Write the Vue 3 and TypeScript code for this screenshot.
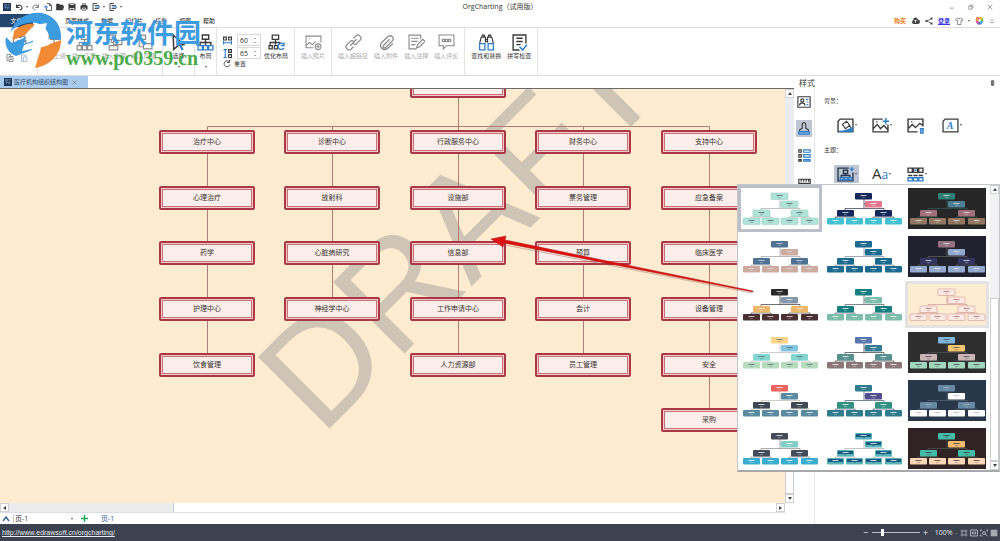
<script setup lang="ts">
import { h, ref } from 'vue'

interface Shape { d: string; s?: string; f?: string; w?: number }
const K = '#3a3a3a'
const B = '#2f7fc8'
const G = '#8b8b8b'

const icons: Record<string, Shape[]> = {
  app: [{ d: 'M0 0H16V16H0Z', f: '#1c3554' }, { d: 'M3 3h4v3H3zM9 3h4M9 6h4M5 6v6M3 9h10M9 9v4M12 9v4', s: '#6f9ac4' }],
  undo: [{ d: 'M3 3v6h6M3 8c4-6 11-4 11 1 0 3-2 5-5 5', s: K, w: 2.2 }],
  redo: [{ d: 'M13 3v6H7M13 8C9 2 2 4 2 9c0 3 2 5 5 5', s: '#777', w: 2 }],
  newdoc: [{ d: 'M6 1h5l4 4v10H5v-4M11 1v4h4', s: K, w: 1.6 }, { d: 'M0 8h8M4 4v8', s: B, w: 1.8 }],
  folder: [{ d: 'M1 14V2h5l2 2h6v3M1 14l3-7h12l-3 7z', f: K, s: K }],
  save: [{ d: 'M1 1h12l2 2v12H1z', f: K }, { d: 'M4 3h8M4 11h8v4H4z', s: '#fff', w: 1.6 }],
  print: [{ d: 'M4 1h8v4h3v8h-3v2H4v-2H1V5h3z', f: K }, { d: 'M5 3h6M5 10h6v3H5z', s: '#fff', w: 1.4 }],
  exp: [{ d: 'M10 1H2v14h8M5 5h9M5 11h9', s: K, w: 1.8 }, { d: 'M6 8h9M12 5l3 3-3 3', s: B, w: 1.8 }],
  copy: [{ d: 'M2 1h7v3M2 1v12h3M6 5h8v10H6zM8 8h4M8 11h4', s: '#777', w: 1.6 }],
  paste: [{ d: 'M3 2h9v3M3 2v13h3M7 6h7v9H7z', s: '#8faed0', w: 1.6 }],
  clip: [{ d: 'M3 2h10v4M3 2v12h3M6 1h4v2H6zM7 6h7v9H7z', s: G, w: 1.2 }],
  superior: [{ d: 'M3 1h9v4H3zM7.500 5v5M3 10h9v5H3z', s: G, w: 1.1 }],
  org: [{ d: 'M5 1h6v4H5zM8 5v5M3 11V8h10v3M8 8v3M1 11h4v4H1zM6 11h4v4H6zM11 11h4v4h-4z', s: G, w: 1.1 }],
  assist: [{ d: 'M1 1h8v4H1zM5 5v3M7 6h8v4H7zM5 8h2M3 11h8v4H3z', s: G, w: 1.1 }],
  peer: [{ d: 'M1 1h8v4H1zM3 5v7h4M7 9h8v5H7z', s: G, w: 1.1 }],
  cursor: [{ d: 'M3 1l10 9-5 .5-4.500 4z', s: K, w: 1.4 }, { d: 'M9 10l3 5', s: B, w: 2 }],
  layout: [{ d: 'M5 1h6v4H5zM8 5v6M3 11V8h10v3', s: K, w: 1.3 }, { d: 'M1 11h4v4H1zM6 11h4v4H6zM11 11h4v4h-4z', s: B, w: 1.2 }],
  hgap: [{ d: 'M1 2h5v5H1zM10 2h5v5h-5z', s: K, w: 2 }, { d: 'M1 9v6M15 9v6M2 12h12', s: B, w: 2 }],
  vgap: [{ d: 'M10 1h5v5h-5zM10 10h5v5h-5z', s: K, w: 2 }, { d: 'M1 1h6M1 15h6M4 2v12', s: B, w: 2 }],
  reset: [{ d: 'M13 4A6 6 0 1 0 14 9M13 0v5H8', s: K, w: 1.7 }],
  optimize: [{ d: 'M4 1h6v4H4zM7 5v5M2 11V8h9v2M1 11h3v3H1zM6 11h3v3H6z', s: K, w: 1.2 }, { d: 'M15 10a3 3 0 1 0 0 3M15 8v3h-3', s: B, w: 1.2 }],
  photo: [{ d: 'M8 13H1V2h14v6M1 11l3-3 3 2 3-3M4 4.500h1M15 12a2.700 2.700 0 1 1-5.400 0 2.700 2.700 0 0 1 5.400 0M12.300 10.300v3.400M10.600 12h3.400', s: G, w: 1 }],
  link: [{ d: 'M8 4l2.500-2.500a2 2 0 0 1 3 0l1 1a2 2 0 0 1 0 3L11 9a2 2 0 0 1-3 0M8 12l-2.500 2.500a2 2 0 0 1-3 0l-1-1a2 2 0 0 1 0-3L5 7a2 2 0 0 1 3 0M5 11l6-6', s: G, w: 1.2 }],
  attach: [{ d: 'M11 5l-6 6a1.500 1.500 0 0 0 2 2l7-7a3 3 0 0 0-4-4L3 8.500a4 4 0 0 0 5.500 5.500L14 9', s: G, w: 1.2 }],
  note: [{ d: 'M12 5V1H1v13h7M3 4h7M3 7h6M3 10h4M8 13l1-3 5-5 2 2-5 5z', s: G, w: 1.1 }],
  comment: [{ d: 'M1 1h14v10H8l-3 3v-3H1zM4 5h2v2H4zM7 5h2v2H7zM10 5h2v2h-2z', s: G, w: 1 }],
  find: [{ d: 'M4 1h2v2H4zM10 1h2v2h-2zM3 3h4v5M13 3H9v5M3 3L1.500 9M13 3l1.500 6M7 5h2M7 7h2', s: K, w: 1.1 }, { d: 'M1.500 9h5v6h-5zM9.500 9h5v6h-5z', s: B, w: 1.2 }],
  spell: [{ d: 'M14 9V1H2v14h6M5 4h6M5 7h6M5 10h4', s: K, w: 1.3 }, { d: 'M8 12l3 3 4-5', s: B, w: 1.5 }],
  cloud: [{ d: 'M4 14a4 4 0 0 1 0-7 4 4 0 0 1 8-1 4 4 0 0 1 0 8z', f: '#444' }, { d: 'M8 12V7M6 9l2-2 2 2', s: '#fff', w: 1.4 }],
  share: [{ d: 'M13 3L4 8l9 5', s: '#444', w: 1.4 }, { d: 'M11 1h4v4h-4zM1 6h4v4H1zM11 11h4v4h-4z', f: '#444' }],
  shirt: [{ d: 'M5 2L1 5l2 3 2-1v8h7V7l2 1 2-3-5-3c-1 2-4 2-5 0z', s: '#555', w: 1.3 }],
  color: [{ d: 'M8 8L2 2h6z', f: '#e6533c' }, { d: 'M8 8V1l6 2z', f: '#f2b83b' }, { d: 'M8 8l6-5 1 7z', f: '#7ac143' }, { d: 'M8 8l7 2-4 5z', f: '#39a7d8' }, { d: 'M8 8l3 7H4z', f: '#5964c9' }, { d: 'M8 8l-4 7-3-6z', f: '#cf4f9d' }, { d: 'M8 8L1 9l1-7z', f: '#ef8b34' }, { d: 'M6 6h4v4H6z', f: '#fff' }],
  up: [{ d: 'M3 9l5-5 5 5M3 12h10', s: '#666', w: 1.4 }],
  min: [{ d: 'M3 11h9', s: '#444', w: 1.6 }],
  restore: [{ d: 'M2 6h8v8H2zM5 6V3h8v8h-3', s: '#555', w: 1.3 }],
  close: [{ d: 'M2 2l12 12M14 2L2 14', s: '#555', w: 1.5 }],
  pin: [{ d: 'M4 2h6v12H4zM7 2v12', s: '#333', w: 2 }],
  person: [{ d: 'M1 2h14v12H1zM3 12c0-4 6-4 6 0', s: K, w: 1.3 }, { d: 'M6 4.500a1.800 1.800 0 1 0 .1 0', s: K, w: 1.3 }, { d: 'M10 5h3M11 8h2M11 11h2', s: B, w: 1.3 }],
  stamp: [{ d: 'M6 7V3c0-3 4-3 4 0v4l3 2v2H3V9z', s: K, w: 1.3 }, { d: 'M2 11h12v3H2z', f: '#6fa6e0', s: B }],
  list: [{ d: 'M1 1h3v3H1zM1 7h3v3H1zM1 13h3v2H1z', s: K, w: 1.4 }, { d: 'M7 1h8v3H7zM7 7h8v3H7zM7 13h8v2H7z', s: B, w: 1.4 }],
  ruler: [{ d: 'M1 4h14v5H1zM4 4v3M7 4v3M10 4v3M13 4v3', s: K, w: 1.4 }, { d: 'M1 13h14', s: B, w: 2 }],
  bgfill: [{ d: 'M3 2h12v12H1V4z', s: K, w: 1.3 }, { d: 'M2 13c4 0 9-1 13-4v5H2z', f: B }, { d: 'M5 7l4-3 3 4-4 3zM11 7l2 3', s: K, w: 1 }],
  bgimg: [{ d: 'M10 2H1v12h14V7M1 11l4-4 3 4 3-3 4 4M4 4.500h1', s: K, w: 1.3 }, { d: 'M13 1v6M10 4h6', s: B, w: 1.4 }],
  bgdel: [{ d: 'M10 14H1V2h14v7M1 11l4-4 3 3 4-4 3 2M4 4.500h1', s: K, w: 1.3 }, { d: 'M12 11h4M13 11v4h2v-4', s: B, w: 1.4 }],
  bgmark: [{ d: 'M3 2h12v12H1V4z', s: K, w: 1.2 }],
  theme: [{ d: 'M11 2H1v12h14V6M6 4h4v3H6zM8 7v2M4 11V9h8v2', s: '#26364e', w: 1.3 }, { d: 'M3 11h3v2H3zM7 11h3v2H7zM11 11h3v2h-3zM14 1v4M12 3h4', s: B, w: 1.2 }],
  connector: [{ d: 'M1 2h4v4H1zM6 2h4v4H6zM11 2h4v4h-4zM1 9h4M6 9h4M11 9h4', s: K, w: 1.3 }, { d: 'M1 11h4v3H1zM6 11h4v3H6zM11 11h4v3h-4zM7 4h2', s: B, w: 1.3 }],
  fit: [{ d: 'M4 4h8v8H4zM1 4h2M4 1v2M12 1v2M13 4h2M1 12h2M4 13v2M12 13v2M13 12h2', s: '#cfd3da', w: 1.4 }],
  wide: [{ d: 'M1 2h14v12H1zM4 8h8M6 5L4 8l2 3M10 5l2 3-2 3', s: '#cfd3da', w: 1.5 }],
  region: [{ d: 'M1 5V2h3M12 2h3v3M1 11v3h4M11 8a3 3 0 1 1-6 0 3 3 0 0 1 6 0M10 10l5 4', s: '#cfd3da', w: 1.5 }],
  grid: [{ d: 'M1 4h14M1 8h14M1 12h14M4 1v14M8 1v14M12 1v14', s: '#e4e7ec', w: 1.6 }],
}

const Icon = (p: { name: string; size?: number }) =>
  h('svg', { viewBox: '0 0 16 16', width: p.size ?? 8, height: p.size ?? 8, 'aria-hidden': 'true', style: { display: 'block', flex: 'none' } },
    icons[p.name].map(s => h('path', { d: s.d, fill: s.f ?? 'none', stroke: s.s ?? 'none', 'stroke-width': s.w ?? 1.2 })))
Icon.props = ['name', 'size']

interface Tool { icon: string; label: string }
const editTools: Tool[] = [
  { icon: 'superior', label: '插入上级' },
  { icon: 'org', label: '插入下属' },
  { icon: 'assist', label: '插入助理' },
  { icon: 'peer', label: '插入同级' },
]
const linkTools: Tool[] = [
  { icon: 'link', label: '插入超链接' },
  { icon: 'attach', label: '插入附件' },
  { icon: 'note', label: '插入注释' },
  { icon: 'comment', label: '插入评论' },
]
const textTools: Tool[] = [
  { icon: 'find', label: '查找和替换' },
  { icon: 'spell', label: '拼写检查' },
]
const menus = ['开始', '页面样式', '数据', '幻灯片', '任务', '视图', '帮助']

const hGap = ref('60')
const vGap = ref('65')
const zoom = ref(20)

const rowY = [53, 109, 164, 220, 276, 331]
const columns = [
  { x: 207, items: ['治疗中心', '心理治疗', '药学', '护理中心', '饮食管理'] },
  { x: 332, items: ['诊断中心', '放射科', '心脏病研究', '神经学中心'] },
  { x: 458, items: ['行政服务中心', '设施部', '信息部', '工作申请中心', '人力资源部'] },
  { x: 583, items: ['财务中心', '票务管理', '预算', '会计', '员工管理'] },
  { x: 709, items: ['支持中心', '应急备案', '临床医学', '设备管理', '安全', '采购'] },
]

// Colours run: canvas, line, head, assistant, managers, staff, label
const themes: string[][] = [
  ['#fff', '#aaa', '#b0e4d8', '#b0e4d8', '#b0e4d8', '#b0e4d8', '#456'],
  ['#fff', '#234', '#14285a', '#e6788f', '#14285a', '#43c1d3', '#fff'],
  ['#262626', '#2f5d58', '#2f7f76', '#4c7f95', '#a06f7a', '#93765f', '#eee'],
  ['#fff', '#999', '#507394', '#cdac9f', '#507394', '#cdac9f', '#dde'],
  ['#fff', '#789', '#1b6a8f', '#1b6a8f', '#1b6a8f', '#1b6a8f', '#fff'],
  ['#22222f', '#666', '#95707f', '#91a9cc', '#35365f', '#91a9cc', '#eee'],
  ['#fff', '#333', '#292929', '#8597aa', '#ecb768', '#4a3032', '#eee'],
  ['#fff', '#456', '#15807f', '#7bbcaa', '#15807f', '#7bbcaa', '#fff'],
  ['#ffebd0', '#c99', '#fbeae4', '#fbeae4', '#fbeae4', '#fbeae4', '#a66'],
  ['#fff', '#bbb', '#fad58b', '#86c5df', '#82d5d0', '#b5ddbd', '#567'],
  ['#fff', '#333', '#5977ad', '#347b93', '#57908f', '#8c7778', '#fff'],
  ['#2d2e2d', '#555', '#7fb4dd', '#f8c66f', '#cbb5b5', '#a0d7bd', '#445'],
  ['#fff', '#bba', '#ee625d', '#5a8aa0', '#3f4953', '#5a8aa0', '#fff'],
  ['#fff', '#357', '#2f7d8c', '#504d8d', '#329080', '#2f7d8c', '#fff'],
  ['#29374b', '#567', '#6688a3', '#fff', '#6688a3', '#fff', '#abc'],
  ['#fff', '#888', '#434c58', '#83cdc7', '#434c58', '#38add0', '#fff'],
  ['#fff', '#aaa', '#5ab3b7', '#5ab3b7', '#5ab3b7', '#5ab3b7', '#185a80'],
  ['#302323', '#555', '#43bba8', '#f2bb70', '#43bba8', '#fbd6b7', '#433'],
]
const nodes = [
  { x: 30, y: 5, c: 2 }, { x: 40, y: 13, c: 3 }, { x: 12, y: 22, c: 4 }, { x: 50, y: 22, c: 4 },
  { x: 2, y: 30, c: 5 }, { x: 21, y: 30, c: 5 }, { x: 40, y: 30, c: 5 }, { x: 60, y: 30, c: 5 },
]
const thumbs = themes.map((t, i) => ({
  id: i,
  bg: t[0],
  line: t[1],
  label: t[6],
  outline: i === 8 ? '#c58b8b' : i === 0 ? '#8fcabb' : 'none',
  banded: i === 16,
  nodes: nodes.map(n => ({ ...n, fill: t[n.c] })),
}))
</script>

<template>
  <div class="app">
    <header class="titlebar">
      <div class="quick">
        <Icon name="app" />
        <button aria-label="撤销"><Icon name="undo" /></button><i class="caret"></i>
        <button aria-label="重做"><Icon name="redo" /></button>
        <button aria-label="新建"><Icon name="newdoc" /></button>
        <button aria-label="打开"><Icon name="folder" /></button>
        <button aria-label="保存"><Icon name="save" /></button>
        <button aria-label="打印"><Icon name="print" /></button>
        <button aria-label="导入"><Icon name="exp" /></button><i class="caret"></i>
        <button aria-label="导出"><Icon name="exp" /></button><i class="caret"></i>
      </div>
      <h1>OrgCharting（试用版）</h1>
      <div class="winctl">
        <button aria-label="最小化"><Icon name="min" :size="6" /></button>
        <button aria-label="还原"><Icon name="restore" :size="6" /></button>
        <button aria-label="关闭"><Icon name="close" :size="6" /></button>
      </div>
    </header>

    <nav class="menubar">
      <button class="file">文件</button>
      <button v-for="m in menus" :key="m" class="menu">{{ m }}</button>
      <div class="account">
        <a href="#" class="buy">购买</a>
        <button aria-label="云"><Icon name="cloud" :size="9" /></button>
        <button aria-label="分享"><Icon name="share" /></button>
        <a href="#" class="login">登录</a>
        <button aria-label="皮肤"><Icon name="shirt" /></button><i class="caret"></i>
        <button aria-label="主题色"><Icon name="color" :size="9" /></button>
        <button aria-label="收起功能区"><Icon name="up" :size="6" /></button>
      </div>
    </nav>

    <div class="ribbon">
      <div class="group paste-group">
        <button aria-label="粘贴"><Icon name="clip" :size="18" /></button>
        <div class="pair">
          <button aria-label="复制"><Icon name="copy" /></button>
          <button aria-label="选择性粘贴"><Icon name="paste" /></button>
        </div>
      </div>
      <div class="group edit-group">
        <button v-for="t in editTools" :key="t.label" class="tool off"><Icon :name="t.icon" :size="17" /><span>{{ t.label }}</span></button>
      </div>
      <div class="group select-group">
        <button class="tool"><Icon name="cursor" :size="17" /><span>选择</span><i class="caret"></i></button>
      </div>
      <div class="group layout-group">
        <button class="tool"><Icon name="layout" :size="17" /><span>布局</span><i class="caret"></i></button>
      </div>
      <div class="group spacing-group">
        <div class="spacing">
          <label><Icon name="hgap" :size="9" /><span class="spin"><input v-model="hGap" aria-label="水平间距" /><span class="steps"><i></i><i></i></span></span></label>
          <label><Icon name="vgap" :size="9" /><span class="spin"><input v-model="vGap" aria-label="垂直间距" /><span class="steps"><i></i><i></i></span></span></label>
          <button class="reset"><Icon name="reset" /><span>重置</span></button>
        </div>
        <button class="tool"><Icon name="optimize" :size="17" /><span>优化布局</span></button>
      </div>
      <div class="group">
        <button class="tool off"><Icon name="photo" :size="17" /><span>插入照片</span></button>
      </div>
      <div class="group">
        <button v-for="t in linkTools" :key="t.label" class="tool off"><Icon :name="t.icon" :size="17" /><span>{{ t.label }}</span></button>
      </div>
      <div class="group">
        <button v-for="t in textTools" :key="t.label" class="tool"><Icon :name="t.icon" :size="17" /><span>{{ t.label }}</span></button>
      </div>
    </div>

    <div class="workspace">
      <main class="document">
        <div class="doctabs">
          <div class="doctab"><Icon name="app" /><span>医疗机构组织结构图</span><button aria-label="关闭文档"><Icon name="close" :size="5" /></button></div>
        </div>
        <div class="view">
          <div class="canvas">
            <svg class="chart" role="img" aria-label="医疗机构组织结构图">
              <text class="draft" transform="translate(321 348) rotate(-45)">DRAFT</text>
              <path class="wire" d="M458.500 9V42M207.500 42V37.500H709.500V42M332.500 37V42M583.500 37V42" />
              <g v-for="c in columns" :key="c.x">
                <path class="wire" :d="`M${c.x + 0.5} 53V${rowY[c.items.length - 1]}`" />
                <g v-for="(t, i) in c.items" :key="t">
                  <rect class="outer" :x="c.x - 47" :y="rowY[i] - 11" width="94" height="22" rx="1" />
                  <rect class="inner" :x="c.x - 44.5" :y="rowY[i] - 8.5" width="89" height="17" />
                  <text class="name" :x="c.x" :y="rowY[i] + 2">{{ t }}</text>
                </g>
              </g>
              <rect class="outer" x="411" y="-14" width="94" height="22" rx="1" />
              <rect class="inner" x="413.500" y="-11.500" width="89" height="17" />
            </svg>
          </div>
          <div class="vbar">
            <button aria-label="向上滚动"><i class="tri up"></i></button>
            <span class="vtrack"></span><span class="vthumb"></span>
            <button aria-label="向下滚动"><i class="tri down"></i></button>
          </div>
        </div>
        <div class="hbar">
          <button aria-label="向左滚动"><i class="tri left"></i></button>
          <span class="htrack"></span><span class="hthumb"></span>
          <button aria-label="向右滚动"><i class="tri right"></i></button>
        </div>
        <div class="pages">
          <svg class="chev" viewBox="0 0 8 6" width="8" height="6"><path d="M1 5l3-4 3 4" fill="none" stroke="#2e5f96" stroke-width="1.400" /></svg>
          <select aria-label="页面"><option>页-1</option></select>
          <i class="caret"></i>
          <button class="add" aria-label="添加页面"><svg viewBox="0 0 8 8" width="7" height="7"><path d="M4 0v8M0 4h8" stroke="#1ea65a" stroke-width="1.600" /></svg></button>
          <button class="page">页-1</button>
        </div>
        <svg class="pointer" viewBox="0 0 270 62" width="270" height="62" aria-hidden="true">
          <path d="M18 11L265 59" stroke="#8a5a50" stroke-width="1" opacity=".4" />
          <path d="M4 5l15-3-1 4 248 51v1L17 9l-1 4z" fill="#e01010" stroke="#a81414" stroke-width=".5" />
        </svg>
      </main>

      <aside class="side">
        <div class="side-title"><span>样式</span><button aria-label="固定"><Icon name="pin" :size="6" /></button></div>
        <div class="side-body">
          <div class="strip">
            <button aria-label="资料"><Icon name="person" :size="14" /></button>
            <button aria-label="样式" class="on"><Icon name="stamp" :size="14" /></button>
            <button aria-label="列表"><Icon name="list" :size="13" /></button>
            <button aria-label="度量"><Icon name="ruler" :size="13" /></button>
          </div>
          <div class="pane">
            <h2>背景：</h2>
            <div class="choices">
              <button aria-label="背景颜色"><Icon name="bgfill" :size="17" /><i class="caret"></i></button>
              <button aria-label="背景图片"><Icon name="bgimg" :size="17" /><i class="caret"></i></button>
              <button aria-label="移除背景"><Icon name="bgdel" :size="17" /><i class="caret none"></i></button>
              <button aria-label="水印"><span class="mark"><Icon name="bgmark" :size="17" /><b>A</b></span><i class="caret"></i></button>
            </div>
            <h2>主题：</h2>
            <div class="choices">
              <button aria-label="主题" class="on"><Icon name="theme" :size="17" /><i class="caret"></i></button>
              <button aria-label="字体"><span class="aa">A<em>a</em></span><i class="caret"></i></button>
              <button aria-label="连接线"><Icon name="connector" :size="17" /><i class="caret"></i></button>
            </div>
          </div>
        </div>

        <div class="popup">
          <div class="thumbs">
            <button v-for="t in thumbs" :key="t.id" :class="{ picked: t.id === 0, current: t.id === 8 }" :aria-label="`主题 ${t.id + 1}`">
              <svg viewBox="0 0 78 41" width="78" height="41">
                <rect width="78" height="41" :fill="t.bg" />
                <path d="M39 10V21M39 16h4M20 24V20.500H59V24M10 32V29H30V32M48 32V29H69V32" fill="none" :stroke="t.line" stroke-width=".7" />
                <g v-for="(n, i) in t.nodes" :key="i">
                  <rect :x="n.x" :y="n.y" width="17" height="6.500" rx="1" :fill="n.fill" :stroke="t.outline" stroke-width=".5" />
                  <rect v-if="t.banded" :x="n.x + 1" :y="n.y + 1" width="15" height="3" :fill="t.label" />
                  <path :d="`M${n.x + 5.500} ${n.y + 2.500}h6`" :stroke="t.banded ? '#fff' : t.label" stroke-width="1" opacity=".75" />
                  <path :d="`M${n.x + 7} ${n.y + 4.700}h3`" :stroke="t.label" stroke-width=".6" opacity=".6" />
                </g>
              </svg>
            </button>
          </div>
          <div class="vbar">
            <button aria-label="向上滚动主题"><i class="tri up"></i></button>
            <span class="ptrack"></span><span class="pthumb"></span>
            <button aria-label="向下滚动主题"><i class="tri down"></i></button>
          </div>
        </div>
      </aside>
    </div>

    <footer class="status">
      <a href="http://www.edrawsoft.cn/orgcharting/">http://www.edrawsoft.cn/orgcharting/</a>
      <div class="zoom">
        <button aria-label="缩小">−</button>
        <input v-model="zoom" type="range" min="0" max="100" aria-label="缩放" />
        <button aria-label="放大">+</button>
        <span class="pct">100%</span><span class="dot">·</span>
        <button aria-label="适合页面"><Icon name="fit" /></button>
        <button aria-label="适合宽度"><Icon name="wide" /></button>
        <button aria-label="选区"><Icon name="region" /></button>
        <button aria-label="网格"><Icon name="grid" /></button>
      </div>
    </footer>

    <div class="brand">
      <svg viewBox="0 0 60 58" width="60" height="58" aria-hidden="true">
        <path d="M6 21C12 6 26 0 38 2 52 5 58 16 57 29L46 28C44 16 34 10 24 12 16 13 10 17 6 21z" fill="#3d9be0" />
        <path d="M10 20C16 14 24 12 31 13L21 24 9 29z" fill="#f08a35" />
        <path d="M2 26C0 34 4 42 12 45L28 39 31 29 20 33 22 26 8 32z" fill="#3d9be0" />
        <path d="M37 36L57 29C57 43 46 55 31 57L36 41z" fill="#f08a35" />
        <path d="M31 14L43 12 38 30 46 28 45 34 35 37 30 55 24 54 28 38 18 40 20 34 29 31z" fill="#fff" />
      </svg>
      <div class="words"><strong>河东软件园</strong><span>www.pc0359.cn</span></div>
    </div>
  </div>
</template>

<style>
body { margin: 0; }
</style>

<style scoped>
.app { position: relative; display: flex; flex-direction: column; min-height: 100vh; overflow: hidden; background: #fff; color: #333; font: 6px/8px "Open Sans", "Noto Sans CJK SC", sans-serif; }
button, input, select { margin: 0; padding: 0; border: 0; background: none; color: inherit; font: inherit; }
button { display: flex; align-items: center; justify-content: center; flex: none; white-space: nowrap; }
h1, h2 { margin: 0; font-weight: 400; }
.caret { width: 0; height: 0; flex: none; border: 1px solid transparent; border-top: 2px solid #555; border-bottom: 0; }
.caret.none { visibility: hidden; }

.titlebar { display: grid; grid-template-columns: 1fr auto 1fr; align-items: center; height: 14px; }
.quick { display: flex; align-items: center; gap: 4px; padding-left: 3px; }
.quick .caret { margin-left: -1px; }
h1 { font-size: 7px; line-height: 10px; }
.winctl { display: flex; justify-content: flex-end; gap: 13px; padding-right: 7px; }

.menubar { display: flex; align-items: center; height: 13px; border-bottom: 1px solid #dcdcdc; }
.file { width: 33px; height: 13px; margin-right: 8px; background: #24476f; color: #fff; }
.menu { margin-right: 12px; color: #222; }
.account { display: flex; align-items: center; gap: 5px; margin-left: auto; padding-right: 5px; }
.buy { color: #f08020; font-weight: 700; text-decoration: none; }
.login { color: #3a35e0; font-weight: 700; }

.ribbon { display: flex; height: 47px; border-bottom: 1px solid #dcdcdc; }
.group { display: flex; gap: 6px; padding: 6px 6px 0; border-right: 1px solid #e3e3e3; }
.tool { flex-direction: column; justify-content: flex-start; gap: 1px; }
.tool span { line-height: 9px; }
.tool .caret { margin-top: 4px; }
.off { color: #aaa; }
.paste-group { flex-direction: column; gap: 2px; width: 25px; }
.pair { display: flex; gap: 6px; }
.edit-group { padding-left: 4px; }
.select-group { padding: 6px 7px 0; }
.layout-group { padding: 6px 2px 0; }
.spacing-group { gap: 3px; }
.spacing { display: flex; flex-direction: column; gap: 1px; width: 38px; }
.spacing label { display: flex; align-items: center; justify-content: space-between; }
.spin { display: flex; align-items: center; width: 22px; height: 10px; border: 1px solid #d8d8d8; }
.spin input { width: 16px; padding-left: 2px; box-sizing: border-box; font-size: 7px; line-height: 8px; height: 10px; outline: 0; }
.steps { display: flex; flex-direction: column; gap: 3px; }
.steps i { border: 1px solid transparent; border-top: 0; border-bottom: 1px solid #555; width: 0; }
.reset { justify-content: flex-start; gap: 3px; }

.workspace { display: flex; flex: 1; min-height: 0; }
.document { position: relative; display: flex; flex-direction: column; flex: 1; min-width: 0; }
.doctabs { display: flex; height: 12px; border-bottom: 1px solid #6b6b6b; }
.doctab { display: flex; align-items: center; gap: 2px; width: 84px; padding-left: 4px; background: #a9cbee; color: #33506f; }
.doctab button { margin-left: 2px; }
.view { display: flex; flex: 1; min-height: 414px; }
.canvas { flex: 1; min-width: 0; overflow: hidden; background: #ffebd0; }
.chart { display: block; width: 100%; height: 100%; }
.draft { font: 147px "Liberation Sans", Arial, sans-serif; fill: #cec5b6; }
.wire { fill: none; stroke: #b27c74; stroke-width: 1; }
.outer { fill: #f7c9c8; stroke: #a93847; stroke-width: 2; }
.inner { fill: #fceeea; stroke: #c96f78; stroke-width: 1; }
.name { font-size: 7px; fill: #333; text-anchor: middle; }

.vbar { display: flex; flex-direction: column; width: 9px; flex: none; }
.vbar button, .hbar button { width: 9px; height: 9px; box-sizing: border-box; border: 1px solid #cfcfd6; background: #fff; }
.vtrack { flex: 1; background: #ebecef; }
.vthumb { flex: 2; border: 1px solid #c8ccd8; background: #fff; }
.tri { width: 0; height: 0; border: 2px solid transparent; }
.tri.up { border-top: 0; border-bottom: 3px solid #444; }
.tri.down { border-bottom: 0; border-top: 3px solid #444; }
.tri.left { border-left: 0; border-right: 3px solid #444; }
.tri.right { border-right: 0; border-left: 3px solid #444; }
.hbar { display: flex; height: 9px; margin-right: 9px; border-bottom: 1px solid #dcdce4; }
.htrack { flex: 21; background: #ececec; }
.hthumb { flex: 77; border-left: 1px solid #c8ccd8; background: #fff; }
.pages { display: flex; align-items: center; height: 11px; padding-left: 2px; }
.pages select { width: 58px; margin-left: 3px; appearance: none; border-left: 1px solid #ccc; font-size: 7px; line-height: 9px; padding-left: 1px; }
.add { margin-left: 8px; }
.page { margin-left: 13px; color: #2e5f96; font-size: 7px; }
.pointer { position: absolute; left: 487px; top: 158px; z-index: 3; pointer-events: none; }

.side { position: relative; width: 206px; flex: none; display: flex; flex-direction: column; }
.side-title { display: flex; align-items: center; justify-content: space-between; height: 13px; padding: 0 4px 0 5px; font-size: 8px; }
.side-body { display: flex; flex: 1; }
.strip { display: flex; flex-direction: column; align-items: center; gap: 10px; width: 20px; padding-top: 4px; border-right: 1px solid #e6e6e6; }
.strip button { width: 16px; height: 17px; }
.on { background: #bfc6d3; }
.pane { padding: 8px 0 0 9px; }
h2 { font-size: 6px; line-height: 8px; }
.choices { display: flex; gap: 10px; padding: 11px 0 12px 10px; }
.choices button { width: 25px; height: 18px; gap: 1px; }
.mark { position: relative; }
.mark b { position: absolute; inset: 4px 0 0; font: italic 700 10px/10px "Liberation Serif", serif; color: #2f7fc8; text-align: center; }
.aa { font-size: 15px; line-height: 18px; }
.aa em { font-size: 12px; font-style: normal; color: #2f7fc8; }

.popup { position: absolute; top: 108px; right: 0; z-index: 2; display: flex; box-sizing: border-box; width: 263px; border: 1px solid #c3c6ca; border-bottom: 2px solid #a8a8a8; background: #fff; }
.thumbs { flex: 1; display: grid; grid-template-columns: repeat(3, 78px); justify-content: space-between; gap: 7px 4px; padding: 3px 4px 1px 3px; }
.thumbs button { display: block; height: 41px; }
.thumbs svg { display: block; }
.picked { box-shadow: 0 0 0 3px #bbc0c8; }
.current { box-shadow: 0 0 0 3px #e2e2e2; }
.ptrack { flex: 105; background: #f1f1f1; }
.pthumb { flex: 163; border: 1px solid #ccc; background: #fff; }

.status { display: flex; align-items: center; justify-content: space-between; height: 17px; padding: 0 2px; background: #3c4250; color: #e4e7ec; }
.status a { color: #e4e7ec; font: 7px/9px "Liberation Sans", Arial, sans-serif; }
.zoom { display: flex; align-items: center; gap: 2px; }
.zoom button { min-width: 8px; font-size: 9px; line-height: 10px; }
.zoom input { width: 48px; height: 8px; appearance: none; background: linear-gradient(#b9bec8, #b9bec8) center / 100% 1px no-repeat; }
.zoom input::-webkit-slider-thumb { appearance: none; width: 3px; height: 7px; background: #fff; }
.pct { margin-left: 3px; font-size: 7px; }
.dot { margin: 0 1px; }

.brand { position: absolute; left: 4px; top: 11px; z-index: 4; display: flex; align-items: flex-start; pointer-events: none; }
.words { display: flex; flex-direction: column; margin-left: 2px; padding-top: 7px; }
.words strong { color: #3d9be0; font-size: 27px; line-height: 30px; font-weight: 700; }
.words span { color: #4bab4b; font: 700 20px/20px "Liberation Serif", serif; }
</style>
